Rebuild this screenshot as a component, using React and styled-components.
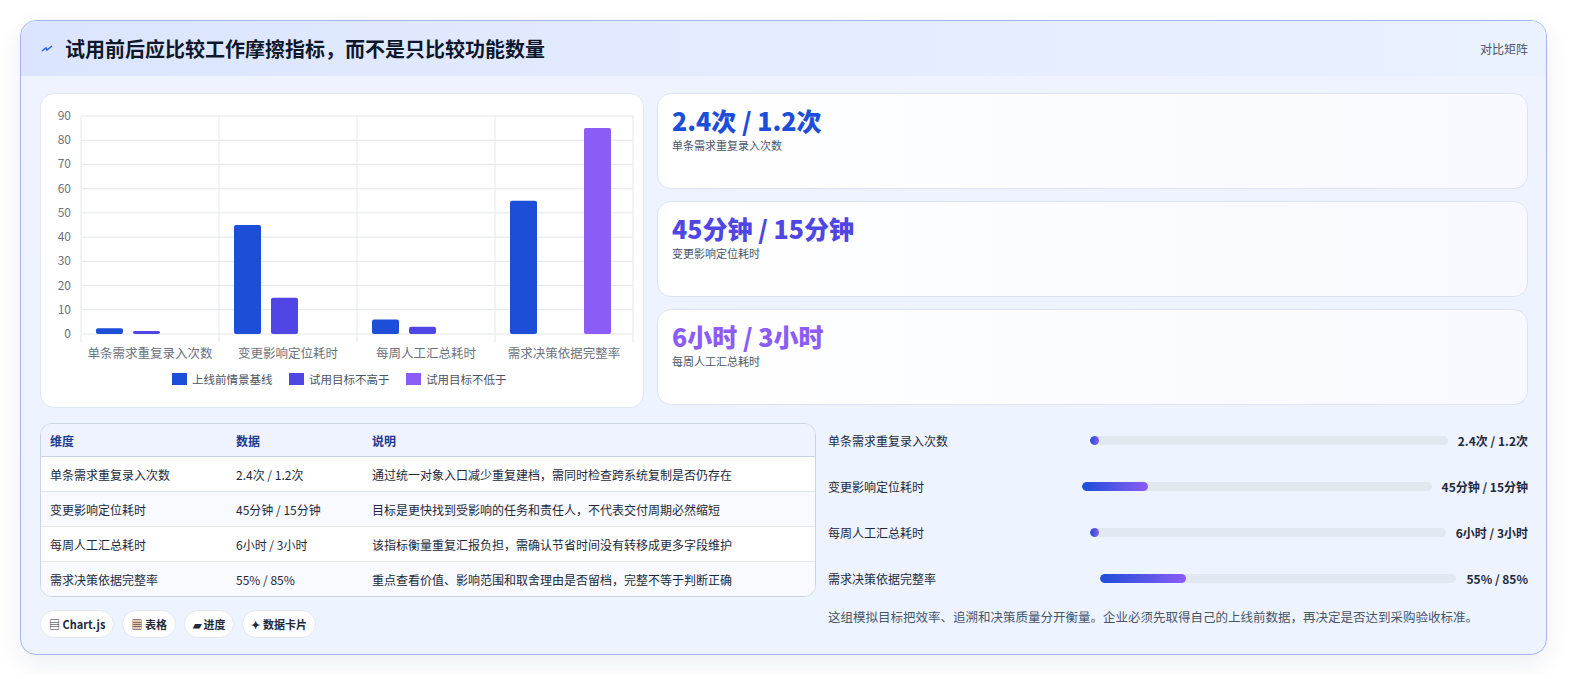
import React from 'react';
import styled, { createGlobalStyle } from 'styled-components';

const Global = createGlobalStyle`
  html, body { overflow: hidden; }
  body { margin: 0; background: #ffffff; font-family: "Noto Sans CJK SC", "Noto Sans", sans-serif; }
`;

const Page = styled.div`
  padding: 20px 32px 20px 20px;
`;

const Card = styled.div`
  border: 1px solid #a5b4fc;
  border-radius: 16px;
  background: linear-gradient(180deg, #eef3ff 0%, #eef4ff 100%);
  box-shadow: 0 8px 24px rgba(30, 41, 90, 0.08);
  overflow: hidden;
`;

const Header = styled.div`
  height: 55px;
  display: flex;
  align-items: center;
  justify-content: space-between;
  padding: 0 18px 0 20px;
  background: linear-gradient(90deg, #dbe5ff, #e6eeff 70%, #eaf1ff);
`;

const Title = styled.h1`
  margin: 0;
  font-size: 20px;
  font-weight: 700;
  color: #0f172a;
  display: flex;
  align-items: center;
  gap: 12px;
`;

const Tag = styled.span`
  font-size: 12px;
  color: #475569;
`;

const Body = styled.div`
  padding: 17px 18px 16px 19px;
  display: grid;
  grid-template-columns: 604px 1fr;
  column-gap: 13px;
  row-gap: 15px;
`;

const Panel = styled.div`
  background: #ffffff;
  border: 1px solid #e2e8f0;
  border-radius: 14px;
`;

const ChartPanel = styled(Panel)`
  height: 313px;
  overflow: hidden;
`;

const Stats = styled.div`
  display: flex;
  flex-direction: column;
  gap: 12px;
`;

const Stat = styled(Panel)`
  height: 96px;
  box-sizing: border-box;
  padding: 10px 14px;
  background: linear-gradient(90deg, #ffffff, #f7f9ff);
  border-color: #dbe3f5;
`;

const StatValue = styled.div`
  font-size: 25px;
  font-weight: 800;
  line-height: 32px;
  color: ${p => p.$color};
`;

const StatLabel = styled.div`
  font-size: 11px;
  color: #475569;
  margin-top: 1px;
`;

const Bottom = styled.div`
  grid-column: 1 / -1;
  display: grid;
  grid-template-columns: 776px 1fr;
  gap: 12px;
`;

const TableWrap = styled.div`
  border: 1px solid #cbd5e1;
  border-radius: 12px;
  overflow: hidden;
  background: #ffffff;
`;

const Table = styled.table`
  width: 100%;
  border-collapse: collapse;
  font-size: 12px;
  color: #1e293b;
  td, th { height: 34px; padding: 0 9px; text-align: left; }
  th { color: #1e3a8a; font-weight: 700; background: #eef3ff; border-bottom: 1px solid #cbd5e1; height: 32px; }
  tr + tr td { border-top: 1px solid #e2e8f0; }
  tbody tr:nth-child(even) td { background: #f8faff; }
`;

const Chips = styled.div`
  display: flex;
  gap: 8px;
  margin-top: 13px;
`;

const Chip = styled.span`
  font-size: 11px;
  font-weight: 600;
  color: #1e293b;
  background: #ffffff;
  border: 1px solid #e2e8f0;
  border-radius: 14px;
  padding: 5px 8px;
`;

const Progress = styled.div`
  margin-top: -6px;
  display: flex;
  flex-direction: column;
`;

const Row = styled.div`
  display: flex;
  align-items: center;
  height: 46px;
  font-size: 12px;
  color: #1e293b;
`;

const RowLabel = styled.div`
  flex-shrink: 0;
`;

const Track = styled.div`
  flex: 1;
  height: 9px;
  border-radius: 5px;
  background: #e2e8f0;
  overflow: hidden;
`;

const Fill = styled.div`
  height: 100%;
  border-radius: 5px;
  background: linear-gradient(90deg, #1d4ed8, #8b5cf6);
`;

const RowValue = styled.div`
  font-weight: 700;
  margin-left: 10px;
  white-space: nowrap;
`;

const Note = styled.p`
  margin: 6px 0 0;
  font-size: 12.5px;
  color: #475569;
`;

const cats = ['单条需求重复录入次数', '变更影响定位耗时', '每周人工汇总耗时', '需求决策依据完整率'];
const series = [
  { color: '#1d4ed8', data: [2.4, 45, 6, 55] },
  { color: '#4f46e5', data: [1.2, 15, 3, null] },
  { color: '#8b5cf6', data: [null, null, null, 85] },
];

function Chart() {
  const x0 = 40, x1 = 592, y0 = 240, yTop = 22;
  const h = (y0 - yTop) / 90;
  const cw = (x1 - x0) / 4;
  return (
    <svg width="604" height="313" fontFamily="'Noto Sans CJK SC', sans-serif">
      {[0, 10, 20, 30, 40, 50, 60, 70, 80, 90].map(v => (
        <g key={v}>
          <line x1={x0} x2={x1} y1={y0 - v * h} y2={y0 - v * h} stroke="#e5e7eb" />
          <text x={x0 - 10} y={y0 - v * h + 4} fontSize="12" fill="#6b7280" textAnchor="end">{v}</text>
        </g>
      ))}
      {[0, 1, 2, 3, 4].map(i => (
        <line key={i} x1={x0 + i * cw} x2={x0 + i * cw} y1={yTop} y2={y0 + 8} stroke="#e5e7eb" />
      ))}
      {cats.map((c, i) => (
        <g key={c}>
          {series.map((s, j) => s.data[i] == null ? null : (
            <rect key={j} x={x0 + i * cw + 15 + j * 37} y={y0 - s.data[i] * h} width="27"
              height={s.data[i] * h} rx="2" fill={s.color} />
          ))}
          <text x={x0 + i * cw + cw / 2} y={y0 + 24} fontSize="12.5" fill="#6b7280" textAnchor="middle">{c}</text>
        </g>
      ))}
      {[['上线前情景基线', 131], ['试用目标不高于', 248], ['试用目标不低于', 365]].map(([t, x], i) => (
        <g key={t}>
          <rect x={x} y={279} width="15" height="12" fill={series[i].color} />
          <text x={x + 20} y={290} fontSize="11.5" fill="#4b5563">{t}</text>
        </g>
      ))}
    </svg>
  );
}

const rows = [
  ['单条需求重复录入次数', '2.4次 / 1.2次', '通过统一对象入口减少重复建档，需同时检查跨系统复制是否仍存在', 2.5, 0],
  ['变更影响定位耗时', '45分钟 / 15分钟', '目标是更快找到受影响的任务和责任人，不代表交付周期必然缩短', 19, -8],
  ['每周人工汇总耗时', '6小时 / 3小时', '该指标衡量重复汇报负担，需确认节省时间没有转移成更多字段维护', 2.5, 0],
  ['需求决策依据完整率', '55% / 85%', '重点查看价值、影响范围和取舍理由是否留档，完整不等于判断正确', 24, 10],
];

export default function App() {
  return (
    <Page>
      <Global />
      <Card>
        <Header>
          <Title><svg width="12" height="12" viewBox="0 0 12 12"><path d="M1 8 L5 5 L6 7 L11 3" stroke="#2563eb" strokeWidth="1.5" fill="none" /></svg>试用前后应比较工作摩擦指标，而不是只比较功能数量</Title>
          <Tag>对比矩阵</Tag>
        </Header>
        <Body>
          <ChartPanel><Chart /></ChartPanel>
          <Stats>
            <Stat><StatValue $color="#1d4ed8">2.4次 / 1.2次</StatValue><StatLabel>单条需求重复录入次数</StatLabel></Stat>
            <Stat><StatValue $color="#4f46e5">45分钟 / 15分钟</StatValue><StatLabel>变更影响定位耗时</StatLabel></Stat>
            <Stat><StatValue $color="#8b5cf6">6小时 / 3小时</StatValue><StatLabel>每周人工汇总耗时</StatLabel></Stat>
          </Stats>
          <Bottom>
            <div>
              <TableWrap>
                <Table>
                  <thead><tr><th style={{ width: 168 }}>维度</th><th style={{ width: 118 }}>数据</th><th>说明</th></tr></thead>
                  <tbody>
                    {rows.map(r => (<tr key={r[0]}><td>{r[0]}</td><td>{r[1]}</td><td>{r[2]}</td></tr>))}
                  </tbody>
                </Table>
              </TableWrap>
              <Chips>
                <Chip>▤ Chart.js</Chip><Chip>▦ 表格</Chip><Chip>▰ 进度</Chip><Chip>✦ 数据卡片</Chip>
              </Chips>
            </div>
            <Progress>
              {rows.map(r => (
                <Row key={r[0]}>
                  <RowLabel style={{ width: 262 + r[4] }}>{r[0]}</RowLabel>
                  <Track><Fill style={{ width: `${r[3]}%` }} /></Track>
                  <RowValue>{r[1]}</RowValue>
                </Row>
              ))}
              <Note>这组模拟目标把效率、追溯和决策质量分开衡量。企业必须先取得自己的上线前数据，再决定是否达到采购验收标准。</Note>
            </Progress>
          </Bottom>
        </Body>
      </Card>
    </Page>
  );
}
